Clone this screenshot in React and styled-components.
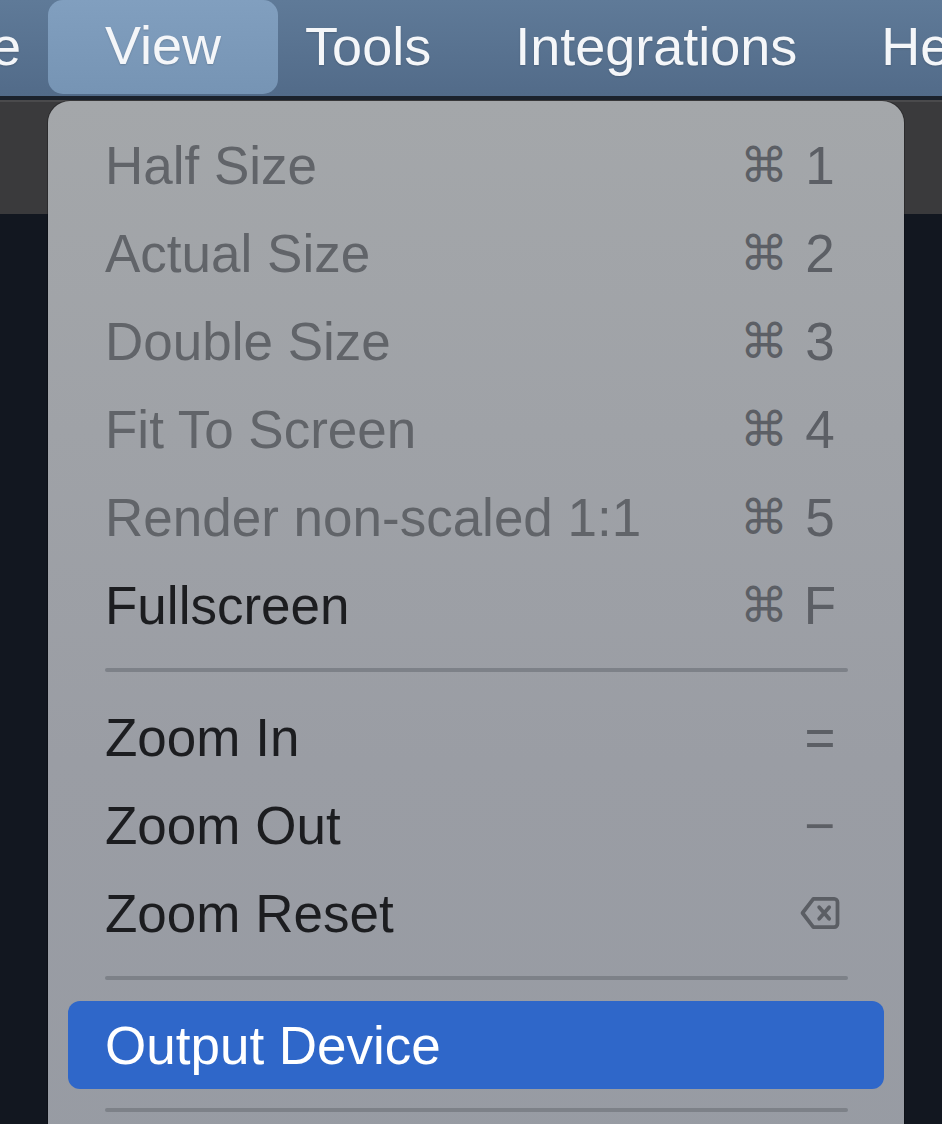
import styled, { createGlobalStyle } from 'styled-components'

const GlobalStyle = createGlobalStyle`
  html, body {
    margin: 0;
    padding: 0;
    background: #121720;
    overflow: hidden;
  }
  body {
    font-family: "Liberation Sans", Arial, sans-serif;
  }
`

const menuBar = ['File', 'View', 'Tools', 'Integrations', 'Help']

const items = [
  { label: 'Half Size', cmd: true, shortcut: '1', disabled: true },
  { label: 'Actual Size', cmd: true, shortcut: '2', disabled: true },
  { label: 'Double Size', cmd: true, shortcut: '3', disabled: true },
  { label: 'Fit To Screen', cmd: true, shortcut: '4', disabled: true },
  { label: 'Render non-scaled 1:1', cmd: true, shortcut: '5', disabled: true },
  { label: 'Fullscreen', cmd: true, shortcut: 'F' },
  { sep: true },
  { label: 'Zoom In', shortcut: '=' },
  { label: 'Zoom Out', shortcut: '\u2212' },
  { label: 'Zoom Reset', shortcut: 'delete' },
  { sep: true },
  { label: 'Output Device', active: true },
  { sep: true },
]

export default function App() {
  return (
    <Screen>
      <GlobalStyle />
      <MenuBar>
        {menuBar.map((m) => (
          <BarItem key={m} $active={m === 'View'}>{m}</BarItem>
        ))}
      </MenuBar>
      <Toolbar />
      <Workspace />

      <Menu>
        {items.map((it, i) =>
          it.sep ? (
            <Separator key={i} />
          ) : (
            <Item key={i} $disabled={it.disabled} $active={it.active}>
              <Label>{it.label}</Label>
              {it.shortcut && (
                <Shortcut $active={it.active}>
                  {it.cmd && <Cmd>⌘</Cmd>}
                  <Key>
                    {it.shortcut === 'delete' ? <DeleteIcon /> : it.shortcut}
                  </Key>
                </Shortcut>
              )}
            </Item>
          )
        )}
      </Menu>
    </Screen>
  )
}

function DeleteIcon() {
  return (
    <svg width="48" height="40" viewBox="0 0 48 40" fill="none">
      <path
        d="M16 3 H41 a4 4 0 0 1 4 4 V33 a4 4 0 0 1 -4 4 H16 L3 20 Z"
        stroke="#5b5e64"
        strokeWidth="4.5"
        strokeLinejoin="round"
      />
      <path d="M23 13 L35 27 M35 13 L23 27" stroke="#5b5e64" strokeWidth="4.5" strokeLinecap="round" />
    </svg>
  )
}

const Screen = styled.div`
  position: relative;
  width: 942px;
  height: 1124px;
  overflow: hidden;
  background: #121720;
  display: flex;
  flex-direction: column;
`

const MenuBar = styled.div`
  height: 96px;
  flex: none;
  display: flex;
  align-items: stretch;
  margin-left: -108px;
  background: linear-gradient(#5f7a98, #526b89);
  border-bottom: 4px solid #1b222c;
  white-space: nowrap;
`

const BarItem = styled.div`
  display: flex;
  align-items: center;
  padding: 0 ${(p) => (p.$active ? '57px' : '42px')} 4px;
  margin: ${(p) => (p.$active ? '0 -15px 2px' : '0')};
  border-radius: 15px;
  background: ${(p) => (p.$active ? 'linear-gradient(#819fbf, #7694b4)' : 'transparent')};
  color: #f4f6f9;
  font-size: 54px;
  text-shadow: 0 1px 2px rgba(0, 0, 0, 0.15);
`

const Toolbar = styled.div`
  height: 112px;
  flex: none;
  background: #3a3a3c;
  border-top: 2px solid #4a4a4c;
`

const Workspace = styled.div`
  flex: 1;
  background: #121720;
`

const Menu = styled.div`
  position: absolute;
  left: 48px;
  top: 101px;
  width: 856px;
  height: 1100px;
  padding-top: 20px;
  box-sizing: border-box;
  border-radius: 22px;
  background: linear-gradient(#a4a7aa, #9a9da4 60%, #979ba3);
  box-shadow: 0 0 0 1px rgba(0, 0, 0, 0.25);
`

const Item = styled.div`
  height: 88px;
  margin: 0 20px;
  padding: 0 44px 0 37px;
  display: flex;
  align-items: center;
  justify-content: space-between;
  border-radius: 12px;
  background: ${(p) => (p.$active ? '#2f67c9' : 'transparent')};
  color: ${(p) => (p.$active ? '#ffffff' : p.$disabled ? '#616469' : '#1c1d20')};
  font-size: 53px;
`

const Label = styled.span`
  white-space: nowrap;
`

const Shortcut = styled.span`
  display: flex;
  align-items: center;
  gap: 18px;
  color: ${(p) => (p.$active ? '#ffffff' : '#5c5f65')};
`

const Cmd = styled.span`
  width: 42px;
  text-align: center;
  font-family: "DejaVu Sans", sans-serif;
  font-size: 48px;
`

const Key = styled.span`
  width: 40px;
  display: flex;
  justify-content: center;
  align-items: center;
`

const Separator = styled.div`
  height: 4px;
  margin: 19px 56px 21px 57px;
  background: #7d8188;
  border-radius: 2px;
`
